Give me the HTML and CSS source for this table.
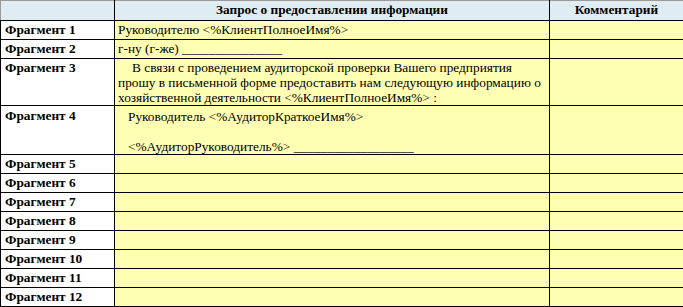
FILE: index.html
```html
<!DOCTYPE html>
<html lang="ru">
<head>
<meta charset="utf-8">
<link rel="stylesheet" href="styles.css">
</head>
<body>
<table class="grid">
  <colgroup>
    <col class="c-label">
    <col class="c-text">
    <col class="c-comment">
  </colgroup>
  <thead>
    <tr class="head">
      <th class="h-label"></th>
      <th class="h-text">Запрос о предоставлении информации</th>
      <th class="h-comment">Комментарий</th>
    </tr>
  </thead>
  <tbody>
    <tr class="row"><td class="label">Фрагмент 1</td><td class="text">Руководителю &lt;%КлиентПолноеИмя%&gt;</td><td class="text"></td></tr>
    <tr class="row"><td class="label">Фрагмент 2</td><td class="text">г-ну (г-же) _______________</td><td class="text"></td></tr>
    <tr class="row tall3"><td class="label">Фрагмент 3</td><td class="text para"><p class="indent">В связи с проведением аудиторской проверки Вашего предприятия прошу в письменной форме предоставить нам следующую информацию о хозяйственной деятельности &lt;%КлиентПолноеИмя%&gt; :</p></td><td class="text"></td></tr>
    <tr class="row tall4"><td class="label">Фрагмент 4</td><td class="text para sign"><p>Руководитель &lt;%АудиторКраткоеИмя%&gt;</p><p>&nbsp;</p><p>&lt;%АудиторРуководитель%&gt; __________________</p></td><td class="text"></td></tr>
    <tr class="row"><td class="label">Фрагмент 5</td><td class="text"></td><td class="text"></td></tr>
    <tr class="row"><td class="label">Фрагмент 6</td><td class="text"></td><td class="text"></td></tr>
    <tr class="row"><td class="label">Фрагмент 7</td><td class="text"></td><td class="text"></td></tr>
    <tr class="row"><td class="label">Фрагмент 8</td><td class="text"></td><td class="text"></td></tr>
    <tr class="row"><td class="label">Фрагмент 9</td><td class="text"></td><td class="text"></td></tr>
    <tr class="row"><td class="label">Фрагмент 10</td><td class="text"></td><td class="text"></td></tr>
    <tr class="row"><td class="label">Фрагмент 11</td><td class="text"></td><td class="text"></td></tr>
    <tr class="row last"><td class="label">Фрагмент 12</td><td class="text"></td><td class="text"></td></tr>
  </tbody>
</table>
</body>
</html>
```
FILE: styles.css
```css
html, body {
  margin: 0;
  padding: 0;
  background: #ffffff;
}

body {
  font-family: "Liberation Serif", "Times New Roman", serif;
  font-size: 13.33px;
  color: #000000;
}

.grid {
  border-collapse: collapse;
  table-layout: fixed;
  width: 683px;
}

.c-label { width: 114px; }
.c-text { width: 435px; }
.c-comment { width: 134px; }

.grid th,
.grid td {
  border: 1px solid #000000;
  vertical-align: top;
  padding: 0 3px;
  line-height: 18px;
  overflow: hidden;
  white-space: nowrap;
}

.head th {
  background: #dfecf2;
  font-weight: bold;
  text-align: center;
  height: 19px;
  border-top-color: #9a9a9a;
  line-height: 18px;
}

.head .h-label {
  border-left-color: #9a9a9a;
}

.row td {
  height: 18px;
}

.grid .label {
  background: #ffffff;
  font-weight: bold;
  padding-left: 4px;
}

.text {
  background: #ffffb3;
}

.grid .para {
  white-space: normal;
  padding-top: 1px;
  padding-right: 2px;
}

.para p {
  margin: 0;
  line-height: 15px;
}

.indent {
  text-indent: 14px;
}

.tall3 td { height: 44px; }
.tall4 td { height: 45px; }

.grid .sign {
  padding-top: 3px;
}

.sign p {
  padding-left: 10px;
}

.grid .tall4 .label {
  padding-top: 1px;
}

.last td { height: 17px; }
```
